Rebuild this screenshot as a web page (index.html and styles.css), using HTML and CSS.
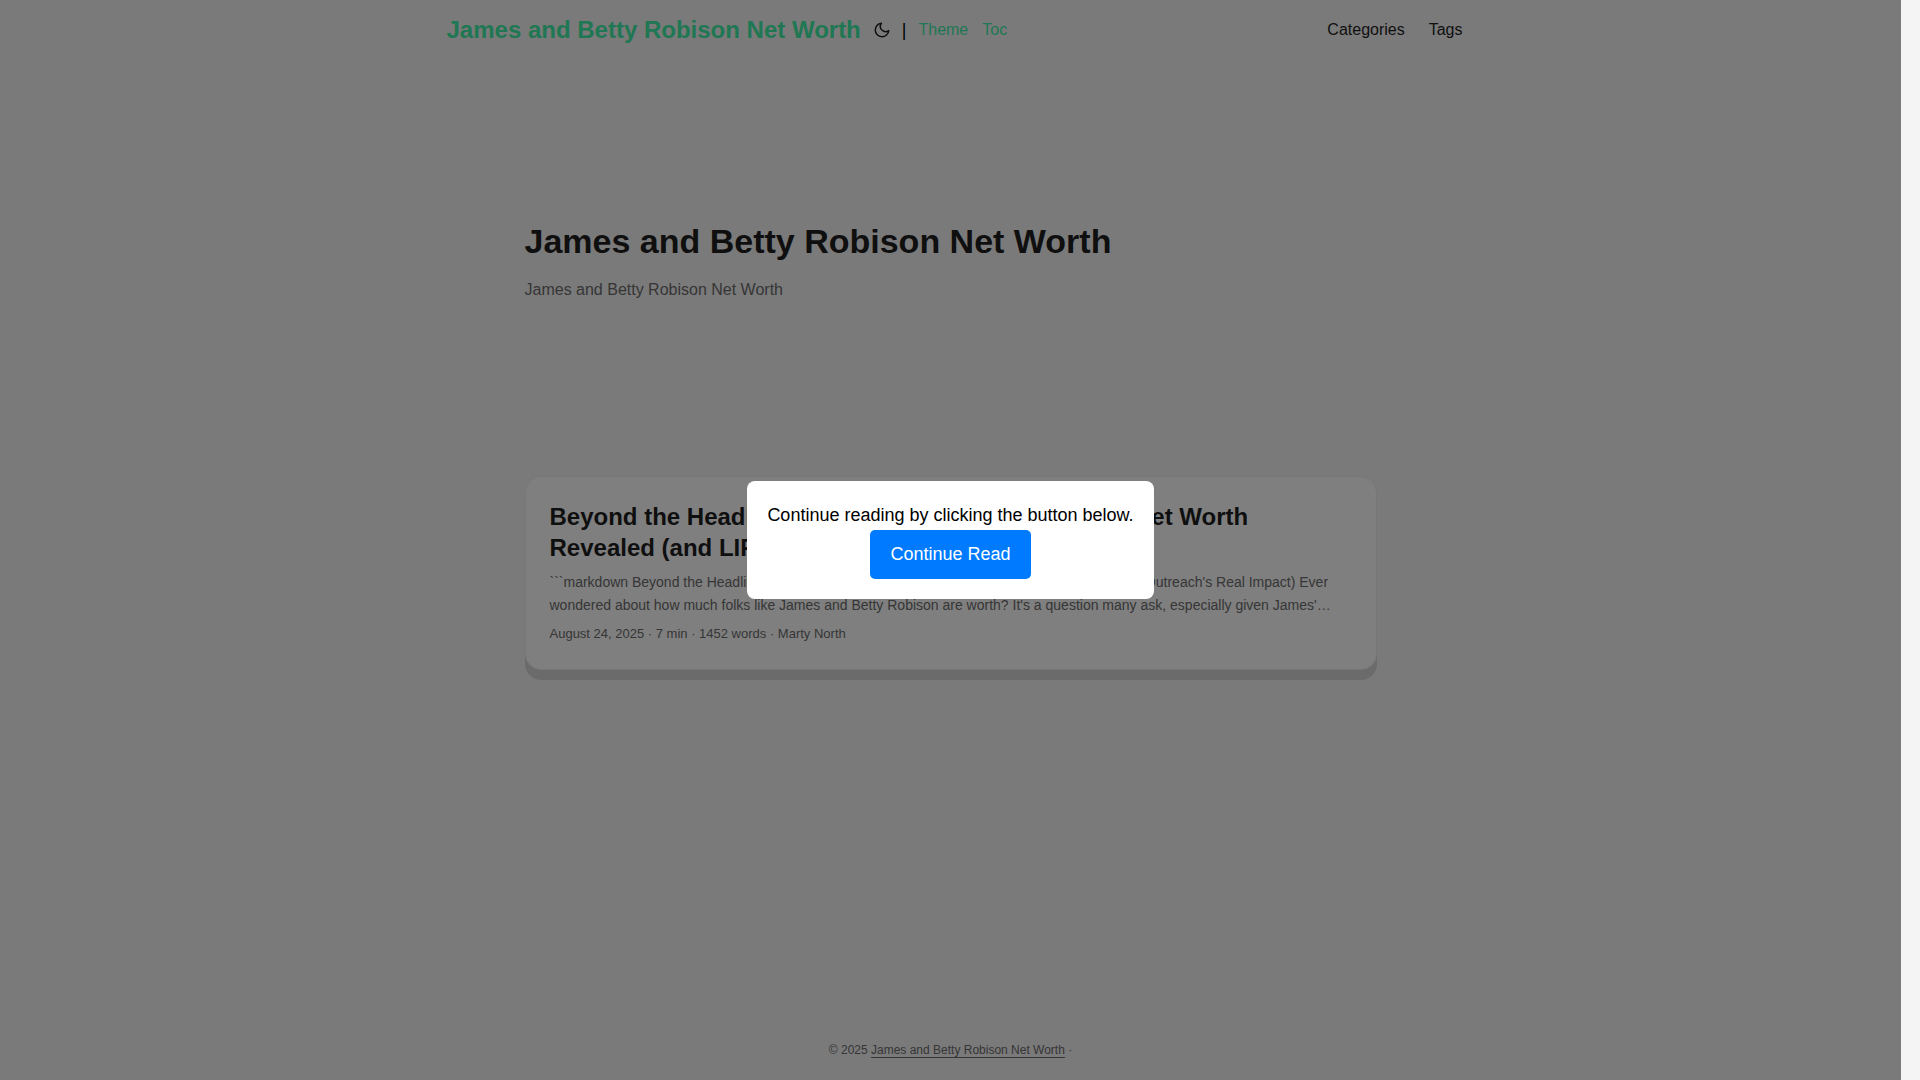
FILE: index.html
```html
<!DOCTYPE html>
<html lang="en">
<head>
    <meta charset="UTF-8">
    <meta name="viewport" content="width=device-width, initial-scale=1.0">
    <title>James and Betty Robison Net Worth</title>
    <link rel="stylesheet" href="styles.css">
</head>
<body>

<header class="header">
    <nav class="nav">
        <div class="logo">
            <a class="logo-link" href="#">James and Betty Robison Net Worth</a>
            <button class="theme-toggle" type="button" aria-label="Toggle theme">
                <svg width="18" height="18" viewBox="0 0 24 24" fill="none" stroke="currentColor" stroke-width="2" stroke-linecap="round" stroke-linejoin="round">
                    <path d="M21 12.79A9 9 0 1 1 11.21 3 7 7 0 0 0 21 12.79z"></path>
                </svg>
            </button>
            <span class="divider">|</span>
            <a class="logo-item" href="#">Theme</a>
            <a class="logo-item" href="#">Toc</a>
        </div>
        <ul class="menu">
            <li><a href="#">Categories</a></li>
            <li><a href="#">Tags</a></li>
        </ul>
    </nav>
</header>

<main class="main">
    <section class="home-info">
        <h1>James and Betty Robison Net Worth</h1>
        <p>James and Betty Robison Net Worth</p>
    </section>

    <article class="post-entry">
        <h2>Beyond the Headlines: James and Betty Robison's Net Worth Revealed (and LIFE Outreach's Real Impact)</h2>
        <p class="entry-content">```markdown Beyond the Headlines: James and Betty Robison's Net Worth Revealed (and LIFE Outreach's Real Impact) Ever wondered about how much folks like James and Betty Robison are worth? It's a question many ask, especially given James'…</p>
        <footer class="entry-footer">August 24, 2025 · 7 min · 1452 words · Marty North</footer>
    </article>
</main>

<footer class="footer">
    <span>© 2025 <a href="#">James and Betty Robison Net Worth</a></span> ·
</footer>

<!-- Popup -->
<div class="overlay" id="overlay">
    <div class="popup" role="dialog" aria-labelledby="popupText">
        <p id="popupText">Continue reading by clicking the button below.</p>
        <button class="popup-button" type="button" id="continueRead">Continue Read</button>
    </div>
</div>

<script>
    const overlay = document.getElementById("overlay");
    document.getElementById("continueRead").addEventListener('click', () => {
        overlay.style.display = "none";
    });
</script>

</body>
</html>
```
FILE: styles.css
```css
:root {
    --gap: 24px;
    --scrollbar: 19px;
    --theme: #f5f5f5;
    --entry: #ffffff;
    --primary: #1e1e1e;
    --secondary: #6c6c6c;
    --green: #3eeea6;
}
* {
    box-sizing: border-box;
}
html {
    background: #f4f4f4;
}
body {
    font-family: "Liberation Sans", Arial, sans-serif;
    font-size: 18px;
    line-height: 1.6;
    display: flex;
    flex-direction: column;
    min-height: 100vh;
    margin: 0 var(--scrollbar) 0 0;
    background: var(--theme);
    color: var(--primary);
}
h1, h2, p, ul {
    margin: 0;
    padding: 0;
}
a {
    color: inherit;
    text-decoration: none;
}
button {
    font: inherit;
    border: 0;
    cursor: pointer;
}
.nav {
    display: flex;
    justify-content: space-between;
    max-width: 1072px;
    margin: 0 auto;
    padding: 0 var(--gap) 0 32px;
    line-height: 60px;
}
.logo {
    display: flex;
    color: var(--green);
}
.logo-link {
    font-size: 24px;
    font-weight: bold;
}
.theme-toggle {
    display: flex;
    align-items: center;
    margin: 0 11px 0 12px;
    padding: 0;
    background: none;
    color: var(--primary);
}
.divider {
    margin-right: 12px;
    color: #000;
}
.logo-item {
    margin-right: 14px;
    font-size: 16px;
}
.menu {
    display: flex;
    gap: var(--gap);
    list-style: none;
    font-size: 16px;
}
.main {
    flex: 1;
    width: 100%;
    max-width: 900px;
    margin: 0 auto;
    padding: 0 var(--gap);
}
.home-info {
    display: flex;
    flex-direction: column;
    justify-content: center;
    min-height: 416px;
}
.home-info h1 {
    font-size: 34px;
    line-height: 44px;
}
.home-info p {
    margin: 14px 0;
    font-size: 16px;
    line-height: 26px;
    color: var(--secondary);
}
.post-entry {
    padding: var(--gap);
    border: 1px solid #eeeeee;
    border-radius: 16px;
    background: var(--entry);
    box-shadow: 0 10px 0 #d6d6d6;
}
.post-entry h2 {
    font-size: 24px;
    line-height: 31px;
}
.entry-content {
    margin: 8px 0 6px;
    font-size: 14px;
    line-height: 23px;
    color: var(--secondary);
}
.entry-footer {
    font-size: 13px;
    line-height: 22px;
    color: var(--secondary);
}
.footer {
    padding: 18px var(--gap);
    font-size: 12px;
    line-height: 24px;
    text-align: center;
    color: var(--secondary);
}
.footer a {
    border-bottom: 1px solid var(--secondary);
}
.overlay {
    position: fixed;
    top: 0;
    right: var(--scrollbar);
    bottom: 0;
    left: 0;
    display: flex;
    justify-content: center;
    align-items: center;
    background: rgba(0, 0, 0, 0.5);
}
.popup {
    padding: 20px;
    border-radius: 8px;
    background: #fff;
    color: #000;
    line-height: 29px;
    text-align: center;
}
.popup-button {
    padding: 10px 20px;
    border-radius: 5px;
    background: #007bff;
    color: #fff;
}
```
